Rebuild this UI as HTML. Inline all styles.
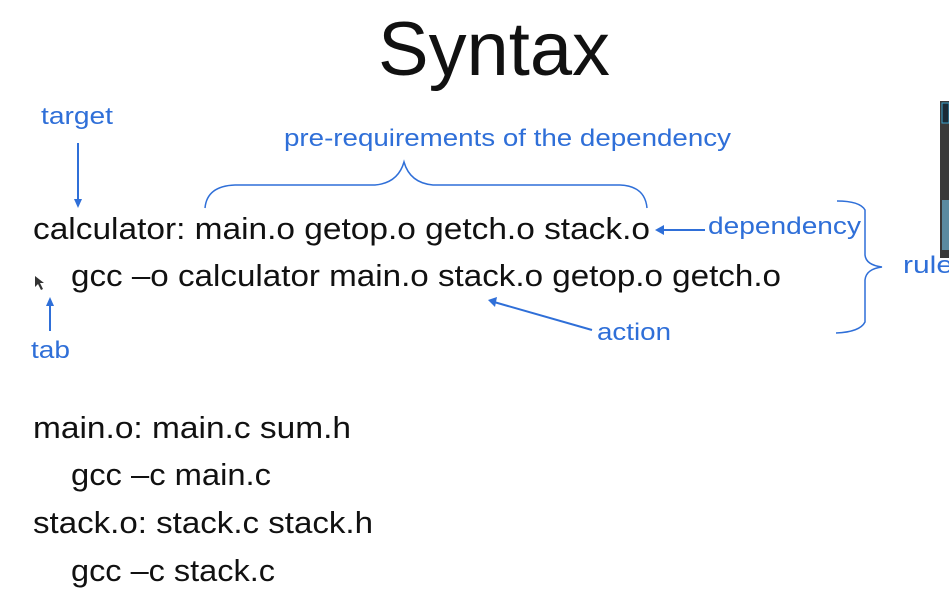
<!DOCTYPE html>
<html><head><style>
html,body{margin:0;padding:0;background:#fff;width:949px;height:596px;overflow:hidden}
svg{display:block}
.k{font-family:"Liberation Sans",sans-serif;font-size:31px;fill:#111}
.b{font-family:"Liberation Sans",sans-serif;font-size:24px;fill:#2f6fd8}
</style></head><body>
<svg width="949" height="596" viewBox="0 0 949 596">
<text x="378" y="75" font-family="Liberation Sans,sans-serif" font-size="76" fill="#111" textLength="232" lengthAdjust="spacingAndGlyphs">Syntax</text>
<text class="b" x="41" y="124" textLength="72" lengthAdjust="spacingAndGlyphs">target</text>
<text class="b" x="284" y="146" textLength="447" lengthAdjust="spacingAndGlyphs">pre-requirements of the dependency</text>
<text class="b" x="708" y="234" textLength="153" lengthAdjust="spacingAndGlyphs">dependency</text>
<text class="b" x="903" y="273" textLength="50" lengthAdjust="spacingAndGlyphs">rule</text>
<text class="b" x="597" y="340" textLength="74" lengthAdjust="spacingAndGlyphs">action</text>
<text class="b" x="31" y="358" textLength="39" lengthAdjust="spacingAndGlyphs">tab</text>
<text class="k" x="33" y="239" textLength="617" lengthAdjust="spacingAndGlyphs">calculator: main.o getop.o getch.o stack.o</text>
<text class="k" x="71" y="286" textLength="710" lengthAdjust="spacingAndGlyphs">gcc –o calculator main.o stack.o getop.o getch.o</text>
<text class="k" x="33" y="438" textLength="318" lengthAdjust="spacingAndGlyphs">main.o: main.c sum.h</text>
<text class="k" x="71" y="485" textLength="200" lengthAdjust="spacingAndGlyphs">gcc –c main.c</text>
<text class="k" x="33" y="533" textLength="340" lengthAdjust="spacingAndGlyphs">stack.o: stack.c stack.h</text>
<text class="k" x="71" y="581" textLength="204" lengthAdjust="spacingAndGlyphs">gcc –c stack.c</text>
<g fill="none" stroke="#2f6fd8" stroke-width="1.5">
<path d="M205 208 Q207 186 235 185 L375 185 Q398 183 404 162 Q410 183 433 185 L620 185 Q645 186 647 208"/>
<path d="M837 201 Q860 201 865 210 L865 255 Q866 265 882 267 Q866 269 865 280 L865 322 Q860 332 836 333"/>
</g>
<g fill="none" stroke="#2f6fd8" stroke-width="2">
<path d="M78 143 L78 203"/>
<path d="M50 331 L50 302"/>
<path d="M705 230 L662 230"/>
<path d="M592 330 L494 302"/>
</g>
<g fill="#2f6fd8">
<path d="M74 199 L82 199 L78 208 Z"/>
<path d="M46 306 L54 306 L50 297 Z"/>
<path d="M664 225 L664 235 L655 230 Z"/>
<path d="M497 297 L495 307 L488 300 Z"/>
</g>
<path d="M35 276 L35 287 L38 284 L41 290 L43 289 L40 283 L44 283 Z" fill="#333"/>
<rect x="940" y="101" width="9" height="157" fill="#3a3a3a"/>
<rect x="942" y="103" width="7" height="20" fill="#1a2a36" stroke="#3aa0c8" stroke-width="1"/>
<rect x="942" y="200" width="7" height="50" fill="#5a8aa0"/>
</svg>
</body></html>
